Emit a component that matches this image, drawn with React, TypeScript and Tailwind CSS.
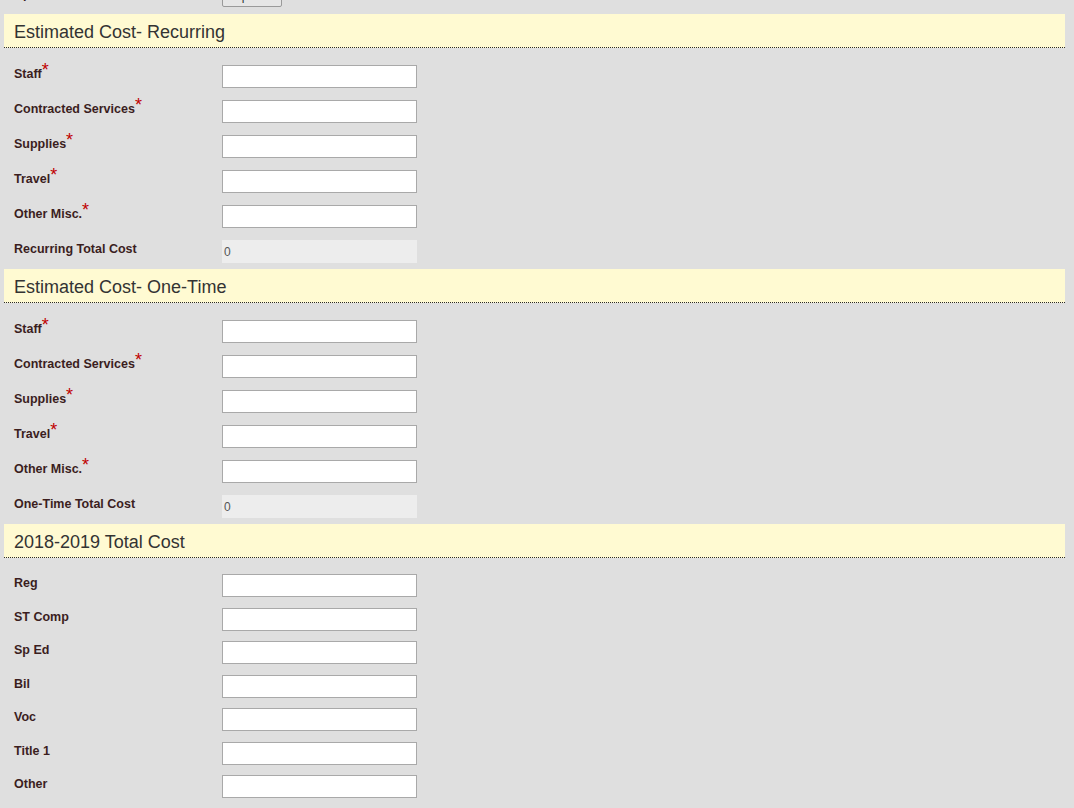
import React from 'react';

type Field = { label: string; required?: boolean; total?: boolean };

const recurring: Field[] = [
  { label: 'Staff', required: true },
  { label: 'Contracted Services', required: true },
  { label: 'Supplies', required: true },
  { label: 'Travel', required: true },
  { label: 'Other Misc.', required: true },
  { label: 'Recurring Total Cost', total: true },
];

const oneTime: Field[] = [
  { label: 'Staff', required: true },
  { label: 'Contracted Services', required: true },
  { label: 'Supplies', required: true },
  { label: 'Travel', required: true },
  { label: 'Other Misc.', required: true },
  { label: 'One-Time Total Cost', total: true },
];

const totals: Field[] = [
  { label: 'Reg' },
  { label: 'ST Comp' },
  { label: 'Sp Ed' },
  { label: 'Bil' },
  { label: 'Voc' },
  { label: 'Title 1' },
  { label: 'Other' },
];

const SectionHeader = ({ title }: { title: string }) => (
  <div className="ml-[4px] mr-[9px] h-[34px] bg-[#fffad2] border-b border-dotted border-[#2a2a2a] pl-[10px] flex items-center">
    <h2 className="text-[18px] text-[#333] leading-none pt-[3px]">{title}</h2>
  </div>
);

const Row = ({ field, tight }: { field: Field; tight?: boolean }) => (
  <div className={`flex items-start ${field.total ? 'h-[29px]' : tight ? 'h-[33.5px]' : 'h-[35px]'}`}>
    <label className="w-[222px] pl-[14px] pt-[2px] h-[17px] text-[12.5px] font-bold leading-[15px] text-[#3b1e1e]">
      {field.label}
      {field.required && (
        <span className="relative -top-[2px] text-[18px] leading-[0] text-[#c00000] font-normal">*</span>
      )}
    </label>
    {field.total ? (
      <div className="w-[195px] h-[23px] bg-[#ededed] pl-[2px] pt-[5px] text-[12px] leading-[15px] text-[#555]">0</div>
    ) : (
      <input type="text" className="w-[195px] h-[23px] bg-white border border-[#a9a9a9] outline-none" />
    )}
  </div>
);

export default function App() {
  return (
    <div className="min-h-screen bg-[#dfdfdf] overflow-hidden font-['Liberation_Sans',Arial,sans-serif]">
      <div className="-mt-[15px] h-[29px] flex items-start">
        <label className="w-[222px] pl-[14px] pt-[2px] text-[12.5px] font-bold leading-[15px] text-[#3b1e1e]">Upload</label>
        <button className="h-[22px] px-[10px] text-[12px] text-[#333] bg-[#e6e6e6] border border-[#9a9a9a] rounded-[2px]">
          Upload
        </button>
      </div>

      <SectionHeader title="Estimated Cost- Recurring" />
      <div className="pt-[17px]">
        {recurring.map((f) => (
          <Row key={f.label} field={f} />
        ))}
      </div>

      <SectionHeader title="Estimated Cost- One-Time" />
      <div className="pt-[17px]">
        {oneTime.map((f) => (
          <Row key={f.label} field={f} />
        ))}
      </div>

      <SectionHeader title="2018-2019 Total Cost" />
      <div className="pt-[16px]">
        {totals.map((f) => (
          <Row key={f.label} field={f} tight />
        ))}
      </div>
    </div>
  );
}
